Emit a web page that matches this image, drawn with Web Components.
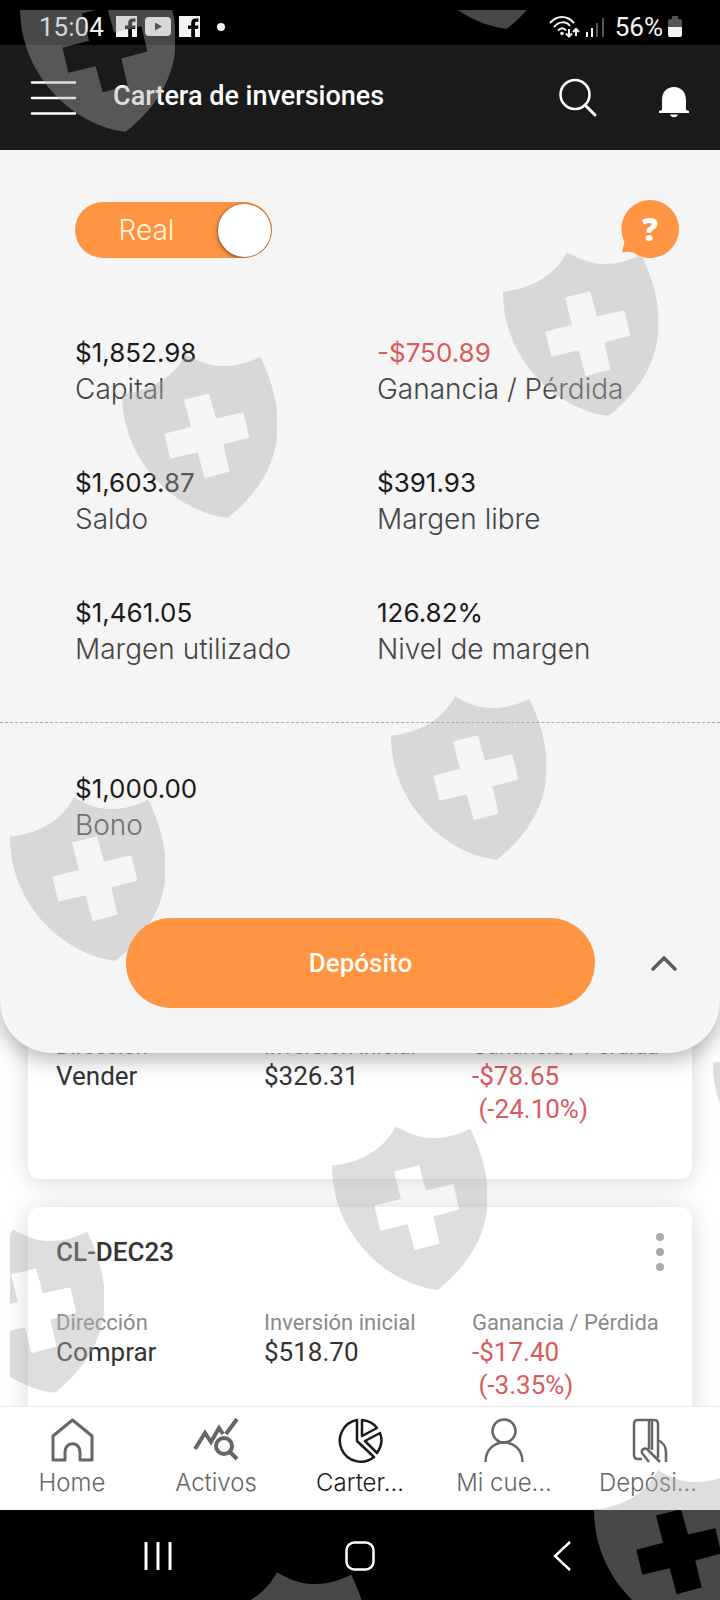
<!DOCTYPE html>
<html lang="es">
<head>
<meta charset="utf-8">
<meta name="viewport" content="width=device-width, initial-scale=1">
<title>Cartera de inversiones</title>
<style>
  body {
    margin: 0;
    font-family: Roboto, "Liberation Sans", sans-serif;
    --round: Inter, "Open Sans", sans-serif;
    --orange: #ff9442;
    --red: #dc5a5c;
    --panel: #f5f5f5;
  }
</style>
</head>
<body>
<portfolio-app></portfolio-app>

<script>
const define = (name, html, setup) => {
  const template = document.createElement('template');
  template.innerHTML = html;
  customElements.define(name, class extends HTMLElement {
    constructor() {
      super();
      this.attachShadow({ mode: 'open' });
      this.shadowRoot.appendChild(template.content.cloneNode(true));
    }
    connectedCallback() {
      if (setup) setup(this, this.shadowRoot);
    }
  });
};

define('status-bar', `
  <style>
    :host {
      display: flex;
      align-items: center;
      justify-content: space-between;
      height: 45px;
      padding: 8px 38px 0 39px;
      box-sizing: border-box;
      background: #000;
      color: #f4f4f4;
      font-size: 26px;
      line-height: 32px;
    }
    div { display: flex; align-items: center; gap: 8px; }
    .right { gap: 5px; }
    .time { margin-right: 4px; }
    .battery { margin-left: 6px; }
    .dot { width: 8px; height: 8px; margin-left: 9px; border-radius: 50%; background: #f4f4f4; }
    svg { display: block; }
  </style>
  <div class="left">
    <span class="time">15:04</span>
    <svg width="21" height="21" viewBox="0 0 21 21"><path fill="#f4f4f4" fill-rule="evenodd" d="M0 0h21v21h-5v-8h3l.5-3.500H16V7.500c0-1.200.6-1.700 1.800-1.700h1.700V2.500h-2.800c-3 0-4.500 1.700-4.500 4.500v2.500H9V13h3.200v8H0z"/></svg>
    <svg width="26" height="19" viewBox="0 0 26 19"><rect width="26" height="19" rx="4" fill="#f4f4f4"/><path d="M10 5.500v8l7-4z" fill="#111"/></svg>
    <svg width="21" height="21" viewBox="0 0 21 21"><path fill="#f4f4f4" fill-rule="evenodd" d="M0 0h21v21h-5v-8h3l.5-3.500H16V7.500c0-1.200.6-1.700 1.800-1.700h1.700V2.500h-2.800c-3 0-4.500 1.700-4.500 4.500v2.500H9V13h3.200v8H0z"/></svg>
    <span class="dot"></span>
  </div>
  <div class="right">
    <svg width="31" height="24" viewBox="0 0 31 24" fill="none" stroke="#f4f4f4" stroke-width="2">
      <path d="M1 8C8 0 18 0 25 8M5 12C10 6 17 6 21 11M9 15.500c3-3 6-3 8 0"/>
      <circle cx="13" cy="18.500" r="1.800" fill="#f4f4f4" stroke="none"/>
      <path d="M20 14v7M17 18.500l3 3 3-3M27 21v-7M24 17l3-3 3 3"/>
    </svg>
    <svg width="19" height="20" viewBox="0 0 19 20">
      <path fill="#f4f4f4" d="M1 15h2v5H1zM6 11h2v9H6z"/>
      <path fill="#555" d="M11 6h2v14h-2zM17 1h2v19h-2z"/>
    </svg>
    <span class="battery">56%</span>
    <svg width="14" height="21" viewBox="0 0 14 21">
      <path fill="#555" d="M4 0h6v3h2a2 2 0 0 1 2 2v6H0V5a2 2 0 0 1 2-2h2z"/>
      <path fill="#f4f4f4" d="M0 11h14v8a2 2 0 0 1-2 2H2a2 2 0 0 1-2-2z"/>
    </svg>
  </div>
`);

define('app-header', `
  <style>
    :host {
      display: flex;
      align-items: center;
      height: 105px;
      padding: 0 30px;
      box-sizing: border-box;
      background: #1a1a1a;
      color: #fff;
    }
    h1 {
      flex: 1;
      margin: 0 0 4px 36px;
      font-size: 27px;
      font-weight: 500;
      line-height: 32px;
    }
    button { padding: 0; border: 0; background: none; color: inherit; }
    svg { display: block; fill: none; stroke: currentColor; stroke-linecap: round; }
    .bell { margin: 8px 0 0 60px; }
    .bell svg { fill: #fff; stroke: none; }
  </style>
  <button aria-label="Menú"><svg width="47" height="36" viewBox="0 0 47 36" stroke-width="2.500"><path d="M2 2.500h43M2 18h43M2 33.500h43"/></svg></button>
  <h1><slot></slot></h1>
  <button aria-label="Buscar"><svg width="40" height="40" viewBox="0 0 40 40" stroke-width="2.500"><circle cx="17" cy="16.500" r="14.500"/><path d="M27 27l10 10" stroke-width="3"/></svg></button>
  <button class="bell" aria-label="Notificaciones"><svg width="32" height="32" viewBox="0 0 32 32"><path d="M4 24V14C4 6 9 1 16 1s12 5 12 13v10l3 1v2H1v-2zM12 28.500h8c-1 3.500-7 3.500-8 0z"/></svg></button>
`);

define('mode-switch', `
  <style>
    :host { display: block; }
    label {
      position: relative;
      display: flex;
      align-items: center;
      width: 197px;
      height: 56px;
      padding-right: 1px;
      box-sizing: border-box;
      border-radius: 28px;
      overflow: hidden;
      background: var(--orange);
      color: #fff3d8;
      font: 300 28px/36px var(--round);
    }
    input { position: absolute; inset: 0; margin: 0; opacity: 0; }
    .text { flex: 1; text-align: center; }
    .knob {
      width: 53px;
      height: 53px;
      border-radius: 50%;
      background: #fff;
      box-shadow: 0 1px 4px rgba(60, 30, 0, .8);
    }
  </style>
  <label>
    <input type="checkbox" role="switch" checked>
    <span class="text"><slot></slot></span>
    <span class="knob"></span>
  </label>
`);

define('help-button', `
  <style>
    :host { display: block; position: relative; z-index: 2; }
    button {
      display: grid;
      place-items: center;
      width: 58px;
      height: 58px;
      padding: 0;
      border: 0;
      background: none;
      color: #fff;
      font: 800 32px/40px "Open Sans", sans-serif;
    }
    svg, span { grid-area: 1 / 1; }
  </style>
  <button aria-label="Ayuda">
    <svg width="58" height="58" viewBox="0 0 58 58"><path fill="var(--orange)" d="M29 0a29 29 0 1 1-17 52.500Q6 51 1 52.500L3.500 42A29 29 0 0 1 29 0z"/></svg>
    <span>?</span>
  </button>
`);

define('account-stat', `
  <style>
    :host {
      display: flex;
      flex-direction: column;
      font: 400 26px/36px var(--round);
      color: #1a1a1a;
    }
    :host([loss]) .value { color: var(--red); }
    .label { color: #444; font-size: 28px; font-weight: 300; }
  </style>
  <span class="value"><slot></slot></span>
  <span class="label"></span>
`, (host, root) => {
  root.querySelector('.label').textContent = host.getAttribute('label');
});

define('account-panel', `
  <style>
    :host {
      display: block;
      position: relative;
      padding: 50px 0 45px;
      border-radius: 0 0 52px 52px;
      background: var(--panel);
      box-shadow: 0 4px 24px rgba(0, 0, 0, .35);
    }
    .top { display: flex; align-items: end; justify-content: space-between; padding: 0 41px 0 75px; }
    .stats {
      display: grid;
      grid-template-columns: 1fr 1fr;
      row-gap: 58px;
      padding: 77px 41px 55px 75px;
    }
    .bonus { padding: 48px 41px 75px 75px; border-top: 1px dashed #aaa; }
    .actions { display: flex; align-items: center; gap: 45px; padding: 0 32px 0 126px; }
    button { padding: 0; border: 0; background: none; }
    .deposit {
      position: relative;
      z-index: 2;
      flex: 1;
      height: 90px;
      border-radius: 45px;
      background: var(--orange);
      color: #fffaf0;
      font: 500 26px/32px Roboto, sans-serif;
    }
    .fold { display: grid; place-items: center; width: 48px; height: 48px; }
  </style>
  <div class="top">
    <mode-switch>Real</mode-switch>
    <help-button></help-button>
  </div>
  <div class="stats">
    <account-stat label="Capital">$1,852.98</account-stat>
    <account-stat label="Ganancia / Pérdida" loss>-$750.89</account-stat>
    <account-stat label="Saldo">$1,603.87</account-stat>
    <account-stat label="Margen libre">$391.93</account-stat>
    <account-stat label="Margen utilizado">$1,461.05</account-stat>
    <account-stat label="Nivel de margen">126.82%</account-stat>
  </div>
  <div class="bonus">
    <account-stat label="Bono">$1,000.00</account-stat>
  </div>
  <div class="actions">
    <button class="deposit">Depósito</button>
    <button class="fold" aria-label="Contraer">
      <svg width="26" height="16" viewBox="0 0 26 16"><path d="M2 14L13 3l11 11" fill="none" stroke="#5c5c5c" stroke-width="3.500" stroke-linecap="round"/></svg>
    </button>
  </div>
`);

define('position-card', `
  <style>
    :host {
      display: block;
      padding: 28px 28px 53px;
      border-radius: 12px;
      background: #fff;
      box-shadow: 0 2px 24px rgba(0, 0, 0, .17);
      color: #333;
      font-size: 26px;
      line-height: 33px;
    }
    header { display: flex; align-items: center; justify-content: space-between; height: 34px; margin-bottom: 41px; }
    h2 { margin: 0; font-size: 26px; font-weight: 500; line-height: 34px; }
    button { padding: 0; border: 0; background: none; }
    svg { display: block; }
    dl { display: grid; grid-template-columns: repeat(3, 1fr); gap: 16px; margin: 0; }
    dt { color: #8a8a8a; font-size: 22px; line-height: 26px; white-space: nowrap; }
    dd { margin: 0; }
    .result { color: var(--red); }
    .result span { display: block; }
  </style>
  <header>
    <h2></h2>
    <button aria-label="Opciones"><svg width="8" height="38" viewBox="0 0 8 38" fill="#aaa"><circle cx="4" cy="4" r="4"/><circle cx="4" cy="19" r="4"/><circle cx="4" cy="34" r="4"/></svg></button>
  </header>
  <dl>
    <div><dt>Dirección</dt><dd class="side"></dd></div>
    <div><dt>Inversión inicial</dt><dd class="amount"></dd></div>
    <div><dt>Ganancia / Pérdida</dt><dd class="result"><span class="profit"></span><span>&nbsp;(<slot></slot>)</span></dd></div>
  </dl>
`, (host, root) => {
  root.querySelector('h2').textContent = host.getAttribute('symbol');
  root.querySelector('.side').textContent = host.getAttribute('side');
  root.querySelector('.amount').textContent = host.getAttribute('amount');
  root.querySelector('.profit').textContent = host.getAttribute('profit');
});

define('nav-item', `
  <style>
    :host { display: block; min-width: 0; color: #666; }
    :host([active]) { color: #1a1a1a; }
    a {
      display: flex;
      flex-direction: column;
      align-items: center;
      gap: 4px;
      color: inherit;
      font: 300 24px/30px var(--round);
      text-decoration: none;
      white-space: nowrap;
    }
  </style>
  <a href="#"><slot name="icon"></slot><span><slot></slot></span></a>
`);

define('bottom-nav', `
  <style>
    :host {
      display: grid;
      grid-template-columns: repeat(5, 1fr);
      height: 104px;
      padding-top: 11px;
      box-sizing: border-box;
      border-top: 1px solid #e9e9e9;
      background: #fff;
    }
    svg { display: block; fill: none; stroke: currentColor; stroke-linejoin: round; }
  </style>
  <nav-item>
    <svg slot="icon" width="46" height="46" viewBox="0 0 46 46" stroke-width="3"><path d="M23.500 2L4 18v24h12V34c0-11 15-11 15 0v8h12V18z"/></svg>
    Home
  </nav-item>
  <nav-item>
    <svg slot="icon" width="46" height="46" viewBox="0 0 46 46"><path stroke-width="4" stroke-linejoin="miter" d="M2 31L12 15l6 9 8-14 4 6M33 16L44 1"/><circle cx="31" cy="28" r="8" stroke-width="4"/><path stroke-width="4" d="M37 34l7 7"/></svg>
    Activos
  </nav-item>
  <nav-item active>
    <svg slot="icon" width="46" height="46" viewBox="0 0 46 46" stroke-width="2.500">
      <path d="M20 2A21 21 0 1 0 37 39L20 23z"/>
      <path d="M25 2v16l15-8Q35 3 25 2zM43 15L28 23l12 12Q47 25 43 15z"/>
    </svg>
    Carter...
  </nav-item>
  <nav-item>
    <svg slot="icon" width="46" height="46" viewBox="0 0 46 46" stroke-width="2.500"><circle cx="23" cy="13" r="11.500"/><path d="M4.500 44c0-26 37-26 37 0"/></svg>
    Mi cue...
  </nav-item>
  <nav-item>
    <svg slot="icon" width="46" height="46" viewBox="0 0 46 46" stroke-width="2.500"><path d="M17 41h-4q-4 0-4-4V6q0-4 4-4h16q4 0 4 4v34M24 2v29M27 2v30M24 44l-7-9c-1-4 3-6 6-3l12 12M33 22q8 4 8 12v10"/></svg>
    Depósi...
  </nav-item>
`);

define('system-nav', `
  <style>
    :host {
      display: grid;
      grid-template-columns: repeat(3, 1fr);
      height: 90px;
      padding: 0 57px;
      box-sizing: border-box;
      background: #000;
    }
    button { display: grid; place-items: center; padding: 2px 0 0; border: 0; background: none; }
    svg { fill: none; stroke: #fff; }
  </style>
  <button aria-label="Recientes"><svg width="30" height="30" viewBox="0 0 30 30" stroke-width="3"><path d="M3 1v28M15 1v28M27 1v28"/></svg></button>
  <button aria-label="Inicio"><svg width="30" height="30" viewBox="0 0 30 30" stroke-width="2.500"><rect x="1.500" y="1.500" width="27" height="27" rx="8"/></svg></button>
  <button aria-label="Atrás"><svg width="18" height="30" viewBox="0 0 18 30" stroke-width="2.500"><path d="M17 1L2 15l15 14"/></svg></button>
`);

// Shields float over the whole screen; the pattern starts 10px in from the top left
define('shield-overlay', `
  <style>
    :host {
      position: absolute;
      inset: 10px 0 0 10px;
      z-index: 1;
      overflow: hidden;
      pointer-events: none;
    }
    svg { display: block; width: 100%; height: 100%; fill: rgba(175, 175, 175, .41); }
  </style>
  <svg aria-hidden="true">
    <defs>
      <symbol id="shield" viewBox="0 0 465 491">
        <path fill-rule="evenodd" d="M0 118C70 112 150 80 192 0C260 42 330 50 415 8C488 160 508 340 317 491C170 475 0 330 0 118zM186 136L261 117L282 193L364 174L382 250L304 271L323 352L248 372L227 294L145 314L127 239L207 218z"/>
      </symbol>
    </defs>
  </svg>
`, (host, root) => {
  const spots = [[10, -42], [391, -145], [112, 344], [493, 242], [381, 686], [0, 787], [322, 1116], [-61, 1219], [703, 1013], [584, 1460], [203, 1562]];
  const svg = root.querySelector('svg');
  for (const [x, y] of spots) {
    const use = document.createElementNS('http://www.w3.org/2000/svg', 'use');
    use.setAttribute('href', '#shield');
    use.setAttribute('x', x);
    use.setAttribute('y', y);
    use.setAttribute('width', 155);
    use.setAttribute('height', 164);
    svg.appendChild(use);
  }
});

define('portfolio-app', `
  <style>
    :host {
      display: flex;
      flex-direction: column;
      position: relative;
      height: 100vh;
      overflow: hidden;
      background: #fff;
    }
    main { flex: 1; min-height: 0; overflow: hidden; }
    /* the list scrolls underneath the account panel */
    .positions {
      display: flex;
      flex-direction: column;
      gap: 28px;
      margin-top: -122px;
      padding: 0 28px;
    }
  </style>
  <status-bar></status-bar>
  <app-header>Cartera de inversiones</app-header>
  <main>
    <account-panel></account-panel>
    <div class="positions">
      <position-card symbol="CL-DEC23" side="Vender" amount="$326.31" profit="-$78.65">-24.10%</position-card>
      <position-card symbol="CL-DEC23" side="Comprar" amount="$518.70" profit="-$17.40">-3.35%</position-card>
    </div>
  </main>
  <bottom-nav></bottom-nav>
  <system-nav></system-nav>
  <shield-overlay></shield-overlay>
`);
</script>
</body>
</html>
